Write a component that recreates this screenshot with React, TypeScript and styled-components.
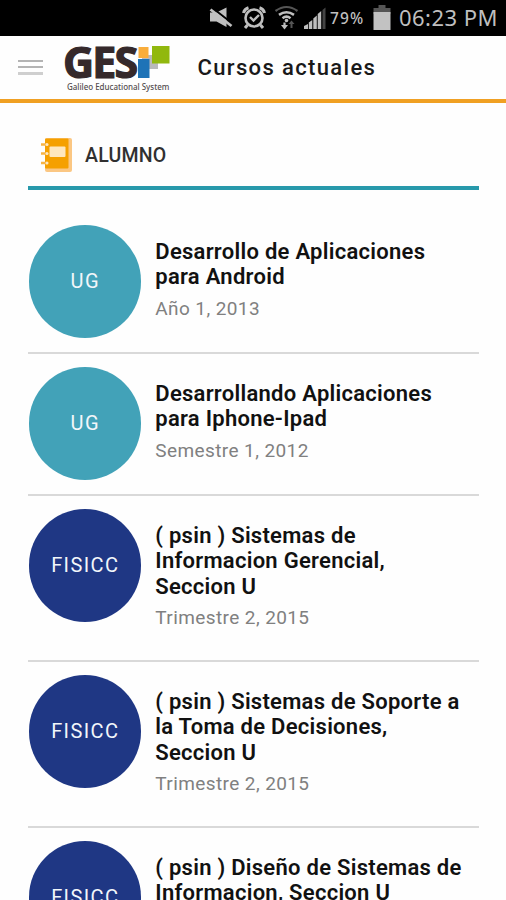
import React from "react";
import styled, { createGlobalStyle } from "styled-components";

const GlobalStyle = createGlobalStyle`
  * { box-sizing: border-box; }
  html, body { margin: 0; background: #fefefe; overflow: hidden; }
  body { font-family: Roboto, "Liberation Sans", sans-serif; }
`;

const Screen = styled.div`
  width: 506px;
  height: 900px;
  overflow: hidden;
  display: flex;
  flex-direction: column;
  background: #fefefe;
`;

const StatusBar = styled.header`
  height: 36px;
  flex: none;
  background: #000;
  display: flex;
  justify-content: flex-end;
  padding-right: 8px;
  color: #bfbfbf;
  font-family: "Noto Sans", sans-serif;
`;

const StatusIcons = styled.svg`
  width: 122px;
  height: 36px;
  flex: none;
`;

const BatteryLevel = styled.span`
  width: 37px;
  font-size: 15.5px;
  font-weight: 500;
  line-height: 36px;
  letter-spacing: 1.1px;
  white-space: nowrap;
`;

const BatteryIcon = styled.svg`
  width: 19px;
  height: 36px;
  margin-left: 5px;
  flex: none;
`;

const Clock = styled.span`
  width: 99px;
  margin-left: 8px;
  font-size: 22px;
  line-height: 35px;
  letter-spacing: 0.45px;
  white-space: nowrap;
`;

const AppBar = styled.div`
  height: 67px;
  flex: none;
  display: flex;
  border-bottom: 4px solid #f0a023;
`;

const MenuButton = styled.button`
  width: 25px;
  height: 15px;
  margin: 24px 0 0 18px;
  padding: 0;
  border: 0;
  background: none;
  display: flex;
  flex-direction: column;
  justify-content: space-between;
`;

const MenuBar = styled.span<{ $soft?: boolean }>`
  height: ${(p) => (p.$soft ? 3 : 2)}px;
  background: ${(p) => (p.$soft ? "#cfcfcf" : "#b4b4b4")};
`;

const Brand = styled.div`
  width: 108px;
  margin-left: 20px;
  display: flex;
  flex-direction: column;
`;

const LogoRow = styled.div`
  display: flex;
  height: 45px;
`;

const LogoWord = styled.span`
  width: 75px;
  height: 45px;
  font: 700 43px/51px "Open Sans", sans-serif;
  letter-spacing: -1.8px;
  -webkit-text-stroke: 1.2px #35292b;
  color: #35292b;
  white-space: nowrap;
`;

const LogoSquares = styled.svg`
  width: 32px;
  height: 45px;
  flex: none;
`;

const Tagline = styled.span`
  padding-left: 4px;
  font: 500 8px/11px "Noto Sans", sans-serif;
  letter-spacing: -0.03px;
  color: #554e50;
  white-space: nowrap;
`;

const PageTitle = styled.h1`
  margin: 0 0 0 26.5px;
  font-size: 22px;
  font-weight: 500;
  line-height: 63px;
  letter-spacing: 1.35px;
  color: #191919;
  white-space: nowrap;
`;

const Content = styled.main`
  padding: 0 27px 0 28px;
  flex: none;
`;

const SectionHeader = styled.div`
  height: 87px;
  padding: 33px 0 0 12px;
  display: flex;
  border-bottom: 4px solid #2799ab;
`;

const NotebookIcon = styled.svg`
  width: 34px;
  height: 36px;
  flex: none;
`;

const SectionTitle = styled.h2`
  margin: 0 0 0 11px;
  font-size: 19.5px;
  font-weight: 500;
  line-height: 39px;
  letter-spacing: 0.2px;
  color: #303030;
`;

const CourseList = styled.ul`
  list-style: none;
  margin: 0;
  padding: 22px 0 0;
`;

const Course = styled.li<{ $lines: number }>`
  height: ${(p) => (p.$lines === 2 ? 142 : 166)}px;
  padding-top: 13px;
  display: flex;
  border-bottom: 2px solid #d9d9d9;
`;

const Badge = styled.div<{ $color: string }>`
  width: 112.5px;
  height: 112.5px;
  margin-left: 0.5px;
  flex: none;
  border-radius: 50%;
  display: flex;
  align-items: center;
  justify-content: center;
  background: ${(p) => p.$color};
  color: #f2f6fa;
  font-size: 20px;
  letter-spacing: 1.4px;
  padding: 0 0 1px 1px;
`;

const CourseText = styled.div`
  padding: 14px 0 0 14.3px;
  white-space: nowrap;
`;

const CourseTitle = styled.h3`
  margin: 0;
  font-size: 22px;
  line-height: 25.3px;
  font-weight: 600;
  letter-spacing: 0.27px;
  color: #111;
`;

const Term = styled.p`
  margin: 6px 0 0;
  font-size: 19px;
  line-height: 25px;
  letter-spacing: 0.4px;
  color: #808080;
`;

const TEAL = "#42a2b8";
const NAVY = "#1f3784";

const courses = [
  { school: "UG", color: TEAL, title: ["Desarrollo de Aplicaciones", "para Android"], term: "Año 1, 2013" },
  { school: "UG", color: TEAL, title: ["Desarrollando Aplicaciones", "para Iphone-Ipad"], term: "Semestre 1, 2012" },
  { school: "FISICC", color: NAVY, title: ["( psin ) Sistemas de", "Informacion Gerencial,", "Seccion U"], term: "Trimestre 2, 2015" },
  { school: "FISICC", color: NAVY, title: ["( psin ) Sistemas de Soporte a", "la Toma de Decisiones,", "Seccion U"], term: "Trimestre 2, 2015" },
  { school: "FISICC", color: NAVY, title: ["( psin ) Diseño de Sistemas de", "Informacion, Seccion U"], term: "Trimestre 2, 2015" },
];

export default function App() {
  return (
    <Screen>
      <GlobalStyle />
      <StatusBar>
        <StatusIcons viewBox="208 0 122 36" fill="none" stroke="#bfbfbf">
          {/* muted speaker */}
          <path d="M210 12.500h6.500l10-5v19.500l-10-5.500h-6.500z" fill="#bfbfbf" stroke="none" />
          <path d="M212.500 8l20.500 16" stroke="#000" strokeWidth="2" />
          <path d="M210.500 9.500l21 16.500" strokeWidth="2.800" />
          {/* alarm clock */}
          <circle cx="254" cy="18" r="8.500" strokeWidth="2.600" />
          <path d="M250 17l3.500 3.500 5.500-5.500" strokeWidth="2.400" />
          <path d="M243.500 13q1-4 5-5.200M264.500 13q-1-4-5-5.200M247.500 25l-2.500 3M260.500 25l2.500 3" strokeWidth="3" />
          {/* wifi with traffic arrows */}
          <path d="M275.500 11q11-8 22 0" stroke="#555" strokeWidth="2.200" />
          <path d="M279 14.800q7.500-5 15 0M282.500 18.200q4-3 8 0" strokeWidth="2.600" />
          <circle cx="286.500" cy="20.500" r="1.800" fill="#bfbfbf" stroke="none" />
          <path d="M284.500 22.500v4" strokeWidth="2.200" />
          <path d="M281 25h7l-3.500 4.500z" fill="#bfbfbf" stroke="none" />
          <path d="M291.500 28v-5" stroke="#555" strokeWidth="2" />
          <path d="M288.500 24h6l-3-3.500z" fill="#555" stroke="none" />
          {/* signal strength */}
          <path d="M304 29v-3l4-2v5zM308.800 29v-6.500l3.500-2.500v9zM313.300 29v-10.500l3.500-3v13.500zM317.700 29v-15l3.500-3v18z" fill="#bfbfbf" stroke="none" />
          <path d="M322.500 29v-19l3-2.500v21.500z" fill="#444" stroke="none" />
        </StatusIcons>
        <BatteryLevel>79%</BatteryLevel>
        <BatteryIcon viewBox="372 0 19 36">
          <path d="M378.500 5h7v3h5v6h-17v-6h5z" fill="#555" />
          <path d="M373.500 12h17v18h-17z" fill="#c2c2c2" />
        </BatteryIcon>
        <Clock>06:23 PM</Clock>
      </StatusBar>
      <AppBar>
        <MenuButton aria-label="Menu">
          <MenuBar />
          <MenuBar />
          <MenuBar $soft />
        </MenuButton>
        <Brand>
          <LogoRow>
            <LogoWord>GES</LogoWord>
            <LogoSquares viewBox="138 36 32 45">
              <path d="M142 55h16v14h-16z" fill="#b9b9bb" />
              <path d="M138.500 47h10v11h-10z" fill="#f9ad3b" />
              <path d="M138 59h11.500v19h-11.500z" fill="#1e73b7" />
              <path d="M152 46h17.500v17.500h-17.500z" fill="#91b80e" />
            </LogoSquares>
          </LogoRow>
          <Tagline>Galileo Educational System</Tagline>
        </Brand>
        <PageTitle>Cursos actuales</PageTitle>
      </AppBar>
      <Content>
        <SectionHeader>
          <NotebookIcon viewBox="40 136 34 36">
            <rect x="45" y="138" width="27" height="34" rx="2" fill="#fbc783" />
            <rect x="45" y="138.500" width="23.500" height="30" rx="1" fill="#f5a000" />
            <rect x="49.500" y="146.500" width="16" height="10.500" rx="1" fill="#fee7bf" />
            <path d="M41 144.500h6M41 153.500h6M41 163h6" stroke="#f7b445" strokeWidth="2.400" />
            <circle cx="47" cy="144.500" r="1.500" fill="#fee7bf" />
            <circle cx="47" cy="153.500" r="1.500" fill="#fee7bf" />
            <circle cx="47" cy="163" r="1.500" fill="#fee7bf" />
          </NotebookIcon>
          <SectionTitle>ALUMNO</SectionTitle>
        </SectionHeader>
        <CourseList>
          {courses.map((course, i) => (
            <Course key={i} $lines={course.title.length}>
              <Badge $color={course.color}>{course.school}</Badge>
              <CourseText>
                <CourseTitle>
                  {course.title.map((line) => (
                    <React.Fragment key={line}>
                      {line}
                      <br />
                    </React.Fragment>
                  ))}
                </CourseTitle>
                <Term>{course.term}</Term>
              </CourseText>
            </Course>
          ))}
        </CourseList>
      </Content>
    </Screen>
  );
}
